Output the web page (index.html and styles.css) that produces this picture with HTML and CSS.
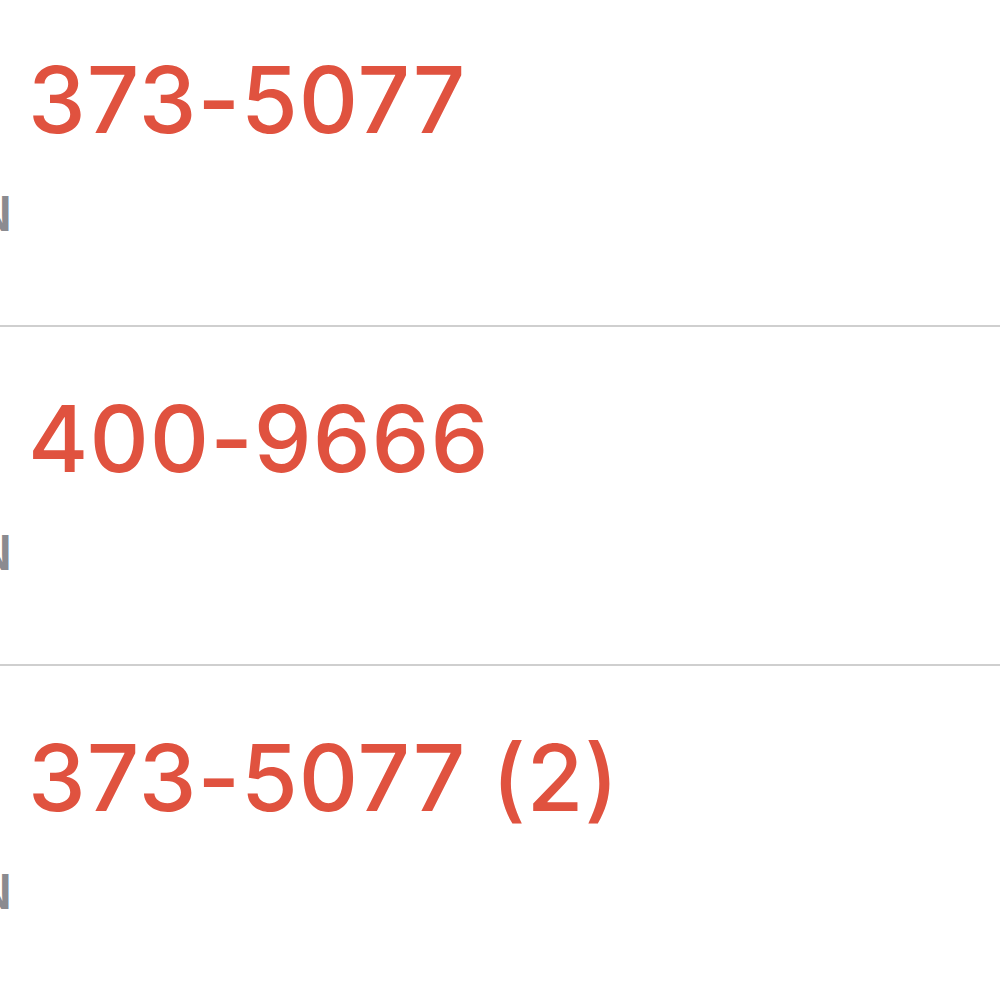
FILE: index.html
```html
<!DOCTYPE html>
<html lang="en">
<head>
    <meta charset="UTF-8">
    <meta name="viewport" content="width=device-width, initial-scale=1.0">
    <title>Recents</title>
    <link rel="stylesheet" href="styles.css">
</head>
<body>

    <ul class="call-list">
        <li class="call">
            <span class="call-type">UNKNOWN</span>
            <span class="call-number">373-5077</span>
        </li>
        <li class="call">
            <span class="call-type">UNKNOWN</span>
            <span class="call-number">400-9666</span>
        </li>
        <li class="call">
            <span class="call-type">UNKNOWN</span>
            <span class="call-number">373-5077 (2)</span>
        </li>
    </ul>

</body>
</html>
```

FILE: styles.css
```css
body {
    font-family: Inter, "Liberation Sans", Arial, sans-serif;
    background-color: #ffffff;
    margin: 0;
    overflow: hidden;
}

.call-list {
    list-style: none;
    margin: -12px 0 0;
    padding: 0;
}

.call {
    display: grid;
    grid-template-columns: 28px 1fr;
    grid-template-rows: 100px 56px;
    row-gap: 36px;
    height: 339px;
    padding-top: 62px;
    box-sizing: border-box;
    border-bottom: 2px solid #cfcfcf;
}

.call-number {
    grid-column: 2;
    grid-row: 1;
    font-size: 92px;
    font-weight: 500;
    line-height: 100px;
    letter-spacing: 1px;
    color: #e0523f;
    white-space: nowrap;
}

.call-type {
    grid-column: 1;
    grid-row: 2;
    justify-self: end;
    margin-right: 16px;
    font-size: 48px;
    font-weight: 600;
    line-height: 56px;
    color: #8b8b90;
    white-space: nowrap;
}
```
